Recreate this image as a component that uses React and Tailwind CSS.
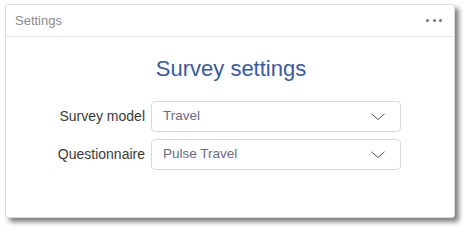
import React from "react";

function Chevron() {
  return (
    <svg width="14" height="8" viewBox="0 0 14 8" fill="none" className="shrink-0">
      <path d="M0.5 0.8 L7 6.5 L13.5 0.8" stroke="#555" strokeWidth="1" />
    </svg>
  );
}

function SelectRow({ label, value }) {
  return (
    <div className="flex items-center">
      <div className="w-[140px] text-right pr-[6px] text-[14px] text-[#3a3a3a]">{label}</div>
      <div className="w-[250px] h-[31px] border border-[#d9d9d9] rounded-[4px] flex items-center justify-between pl-[11px] pr-[15px] bg-white">
        <span className="text-[13.5px] text-[#6a6a80]">{value}</span>
        <Chevron />
      </div>
    </div>
  );
}

export default function App() {
  return (
    <div
      className="w-[469px] h-[233px] bg-white pt-[4px] pl-[5px]"
      style={{ fontFamily: '"Liberation Sans", Arial, sans-serif' }}
    >
      <div className="w-[450px] h-[214px] border border-[#dcdcdc] rounded-[3px] bg-white shadow-[4px_4px_5px_rgba(0,0,0,0.5)] flex flex-col">
        <div className="h-[32px] border-b border-[#e3e3e3] flex items-center justify-between pl-[9px] pr-[12px]">
          <span className="text-[13px] text-[#8a8a8a]">Settings</span>
          <div className="flex gap-[3.5px] items-center">
            <span className="w-[3px] h-[3px] rounded-full bg-[#777]" />
            <span className="w-[3px] h-[3px] rounded-full bg-[#777]" />
            <span className="w-[3px] h-[3px] rounded-full bg-[#777]" />
          </div>
        </div>
        <div className="flex flex-col">
          <div className="text-center text-[22px] text-[#3a5a9b] pt-[18px] pl-[2px] leading-[28px]">Survey settings</div>
          <div className="flex flex-col gap-[7px] pt-[18px] pl-[5px]">
            <SelectRow label="Survey model" value="Travel" />
            <SelectRow label="Questionnaire" value="Pulse Travel" />
          </div>
        </div>
      </div>
    </div>
  );
}
